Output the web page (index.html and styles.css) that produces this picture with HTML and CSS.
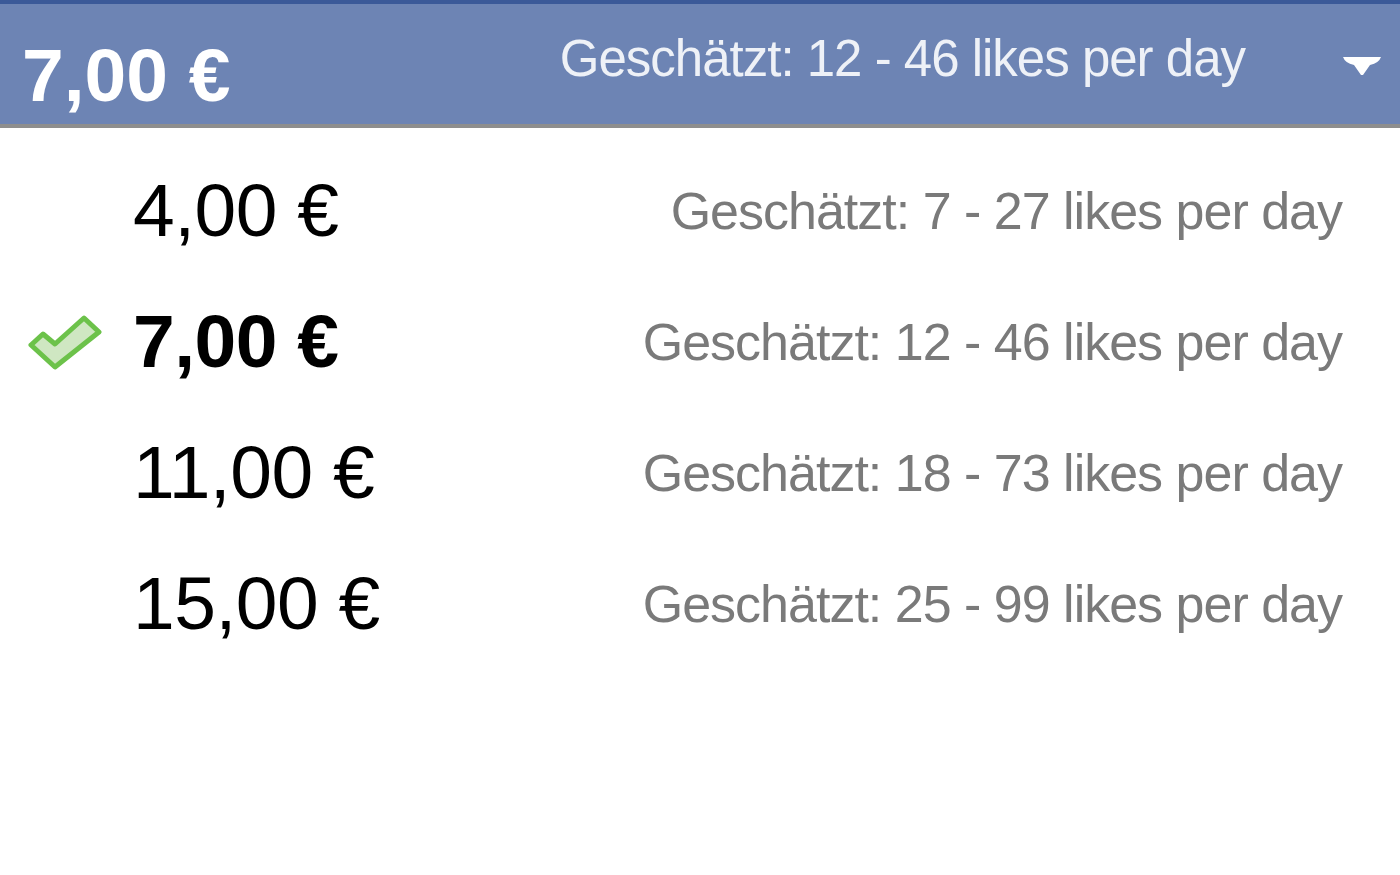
FILE: index.html
```html
<!DOCTYPE html>
<html lang="de">
<head>
    <meta charset="UTF-8">
    <title>Budget</title>
    <link rel="stylesheet" href="styles.css">
</head>
<body>

<div class="budget-select">
    <!-- ausgewaehlter Wert -->
    <div class="selected">
        <span class="selected-price">7,00 €</span>
        <div class="selected-right">
            <span class="selected-estimate">Geschätzt: 12 - 46 likes per day</span>
            <svg class="arrow" width="40" height="22" viewBox="0 0 40 22">
                <path d="M1 2 L39 2 Q37 8 28 10 L21 20 L19 20 L12 10 Q3 8 1 2 Z" fill="#fff"/>
            </svg>
        </div>
    </div>

    <!-- Optionen -->
    <ul class="options">
        <li class="option">
            <span class="check"></span>
            <span class="price">4,00 €</span>
            <span class="estimate">Geschätzt: 7 - 27 likes per day</span>
        </li>
        <li class="option active">
            <span class="check">
                <svg width="74" height="56" viewBox="0 0 74 56">
                    <path d="M3 31 L15 20 L27 30 L56 4 L71 18 L27 53 Z" fill="#cfe7c2" stroke="#6cc24a" stroke-width="5" stroke-linejoin="round"/>
                </svg>
            </span>
            <span class="price">7,00 €</span>
            <span class="estimate">Geschätzt: 12 - 46 likes per day</span>
        </li>
        <li class="option">
            <span class="check"></span>
            <span class="price">11,00 €</span>
            <span class="estimate">Geschätzt: 18 - 73 likes per day</span>
        </li>
        <li class="option">
            <span class="check"></span>
            <span class="price">15,00 €</span>
            <span class="estimate">Geschätzt: 25 - 99 likes per day</span>
        </li>
    </ul>
</div>

</body>
</html>
```

FILE: styles.css
```css
body {
    font-family: "Liberation Sans", Arial, sans-serif;
    background-color: #fff;
    margin: 0;
    padding: 0;
}

.budget-select {
    width: 1400px;
}

.selected {
    display: flex;
    align-items: flex-start;
    height: 120px;
    padding: 0 18px 0 22px;
    background-color: #6d84b4;
    border-top: 4px solid #3b5998;
    border-bottom: 4px solid #8e8e8e;
    color: #fff;
}

.selected-price {
    margin-top: 34px;
    font-size: 75px;
    font-weight: bold;
    line-height: 1;
}

.selected-right {
    margin-left: auto;
    margin-top: 29px;
    display: flex;
    align-items: flex-start;
}

.selected-estimate {
    font-size: 51px;
    letter-spacing: -1px;
    line-height: 1;
    color: #eef1f7;
}

.arrow {
    margin-left: 97px;
    margin-top: 22px;
}

.options {
    list-style: none;
    margin: 0;
    padding: 17px 0 0 0;
}

.option {
    display: flex;
    align-items: center;
    height: 131px;
    padding-right: 58px;
}

.check {
    width: 74px;
    height: 56px;
    margin-left: 28px;
    margin-right: 31px;
}

.price {
    font-size: 75px;
    letter-spacing: -0.5px;
    line-height: 1;
    color: #000;
}

.option.active .price {
    font-weight: bold;
}

.estimate {
    margin-left: auto;
    font-size: 52px;
    letter-spacing: -1px;
    line-height: 1;
    color: #7a7a7a;
}
```
